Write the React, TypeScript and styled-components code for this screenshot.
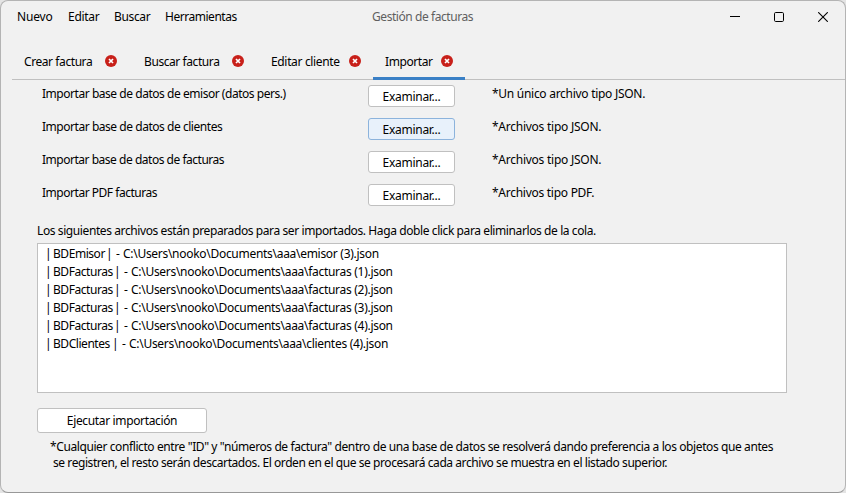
import React from 'react';
import styled, { createGlobalStyle } from 'styled-components';

const GlobalStyle = createGlobalStyle`
  html, body { margin: 0; height: 100%; background: #e4e4e4; overflow: hidden; }
  #root { height: 100%; }
  *, *::before, *::after { box-sizing: border-box; }
  button { font: inherit; color: inherit; }
`;

const Window = styled.div`
  display: flex;
  flex-direction: column;
  width: 846px;
  height: 493px;
  border: 1px solid #b4b4b4;
  border-bottom-color: #989898;
  border-radius: 8px;
  background: #f1f1f1;
  color: #000;
  font: 12px/16px 'Noto Sans', 'Open Sans', sans-serif;
  overflow: hidden;
`;

const Text = styled.span<{ $track?: number }>`
  letter-spacing: ${(p) => p.$track ?? 0}px;
  white-space: pre;
`;

const TitleBar = styled.header`
  display: grid;
  grid-template-columns: 371px 1fr auto;
  align-items: center;
  height: 31px;
`;

const MenuBar = styled.nav`
  display: grid;
  grid-template-columns: 51px 46px 51px auto;
  padding-left: 16px;
`;

const Title = styled(Text)`
  color: #5f5f5f;
`;

const Controls = styled.div`
  display: flex;
`;

const Control = styled.button`
  display: grid;
  place-items: center;
  width: 44px;
  height: 31px;
  padding: 0;
  border: 0;
  background: none;
`;

const TabStrip = styled.div`
  display: flex;
  height: 36px;
  margin: 12px 0 0 11px;
  box-shadow: inset 0 -1px #c0c0c0;
`;

const Tab = styled.div<{ $width: number; $end: number; $active?: boolean }>`
  display: flex;
  justify-content: space-between;
  align-items: center;
  width: ${(p) => p.$width}px;
  padding: 0 ${(p) => p.$end}px 1px 12px;
  box-shadow: ${(p) => (p.$active ? 'inset 0 -3px #3a80c6' : 'none')};

  svg {
    flex: none;
    margin-bottom: 1px;
  }
`;

const ImportGrid = styled.section`
  display: grid;
  grid-template-columns: 326px 87px 1fr;
  grid-auto-rows: 22px;
  row-gap: 11px;
  margin: 5px 0 0 41px;
`;

const Label = styled(Text)`
  line-height: 18px;
`;

const Note = styled(Label)`
  padding-left: 37px;
`;

const Button = styled.button<{ $hot?: boolean; $wide?: boolean }>`
  display: flex;
  align-items: center;
  justify-content: center;
  width: ${(p) => (p.$wide ? 170 : 87)}px;
  height: ${(p) => (p.$wide ? 25 : 22)}px;
  padding: ${(p) => (p.$wide ? 0 : '2px 0 0')};
  border: 1px solid ${(p) => (p.$hot ? '#8cb3dc' : '#c0c0c0')};
  border-radius: 3px;
  background: ${(p) => (p.$hot ? '#e8f1fb' : '#fff')};
`;

const Queue = styled.section`
  display: flex;
  flex-direction: column;
  align-items: flex-start;
  padding: 17px 0 0 36px;
`;

const FileList = styled.ul`
  width: 750px;
  height: 150px;
  margin: 4px 0 15px;
  padding: 1px 0 0 7px;
  border: 1px solid #c0c0c0;
  background: #fff;
  list-style: none;
`;

const FileRow = styled.li<{ $tag: number }>`
  display: grid;
  grid-template-columns: 8px ${(p) => p.$tag}px 10px 7px 1fr;
  height: 18px;
  line-height: 18px;
`;

const Footnote = styled.p`
  display: flex;
  flex-direction: column;
  margin: 6px 0 0 13px;
`;

const SecondLine = styled(Text)`
  padding-left: 3px;
`;

const CloseBadge = () => (
  <svg width="12" height="12" viewBox="0 0 12 12">
    <circle cx="6" cy="6" r="6" fill="#c8201a" />
    <path d="M4 4l4 4M8 4L4 8" stroke="#fff" strokeWidth="1.7" />
  </svg>
);

const menus = [
  { name: 'Nuevo', track: -0.15 },
  { name: 'Editar', track: -0.28 },
  { name: 'Buscar', track: -0.35 },
  { name: 'Herramientas', track: -0.47 },
];

const tabs = [
  { name: 'Crear factura', track: -0.42, width: 120, end: 15 },
  { name: 'Buscar factura', track: -0.42, width: 127, end: 15 },
  { name: 'Editar cliente', track: -0.34, width: 114, end: 12 },
  { name: 'Importar', track: -0.42, width: 92, end: 12, active: true },
];

const imports = [
  { label: 'Importar base de datos de emisor (datos pers.)', track: -0.46, note: '*Un único archivo tipo JSON.', noteTrack: -0.28 },
  { label: 'Importar base de datos de clientes', track: -0.46, note: '*Archivos tipo JSON.', noteTrack: -0.25, hot: true },
  { label: 'Importar base de datos de facturas', track: -0.48, note: '*Archivos tipo JSON.', noteTrack: -0.25 },
  { label: 'Importar PDF facturas', track: -0.47, note: '*Archivos tipo PDF.', noteTrack: -0.27 },
];

const files = [
  { tag: 'BDEmisor', width: 53, file: 'emisor (3).json' },
  { tag: 'BDFacturas', width: 61, file: 'facturas (1).json' },
  { tag: 'BDFacturas', width: 61, file: 'facturas (2).json' },
  { tag: 'BDFacturas', width: 61, file: 'facturas (3).json' },
  { tag: 'BDFacturas', width: 61, file: 'facturas (4).json' },
  { tag: 'BDClientes', width: 59, file: 'clientes (4).json' },
];

export default function App() {
  return (
    <>
      <GlobalStyle />
      <Window>
        <TitleBar>
          <MenuBar>
            {menus.map((m) => (
              <Text key={m.name} $track={m.track}>{m.name}</Text>
            ))}
          </MenuBar>
          <Title $track={-0.43}>Gestión de facturas</Title>
          <Controls>
            <Control aria-label="Minimizar">
              <svg width="10" height="10" viewBox="0 0 10 10"><path d="M0 4.5h10" stroke="#000" /></svg>
            </Control>
            <Control aria-label="Maximizar">
              <svg width="10" height="10" viewBox="0 0 10 10"><rect x=".5" y=".5" width="9" height="9" rx="1.2" fill="none" stroke="#000" /></svg>
            </Control>
            <Control aria-label="Cerrar">
              <svg width="10" height="10" viewBox="0 0 10 10"><path d="M.2.2l9.6 9.6M9.8.2L.2 9.8" stroke="#000" strokeWidth="1.1" /></svg>
            </Control>
          </Controls>
        </TitleBar>
        <TabStrip>
          {tabs.map((t) => (
            <Tab key={t.name} $width={t.width} $end={t.end} $active={t.active}>
              <Text $track={t.track}>{t.name}</Text>
              <CloseBadge />
            </Tab>
          ))}
        </TabStrip>
        <ImportGrid>
          {imports.map((row) => (
            <React.Fragment key={row.label}>
              <Label $track={row.track}>{row.label}</Label>
              <Button $hot={row.hot}><Text $track={-0.28}>Examinar...</Text></Button>
              <Note $track={row.noteTrack}>{row.note}</Note>
            </React.Fragment>
          ))}
        </ImportGrid>
        <Queue>
          <Text $track={-0.402}>
            Los siguientes archivos están preparados para ser importados. Haga doble click para eliminarlos de la cola.
          </Text>
          <FileList>
            {files.map((f) => (
              <FileRow key={f.tag + f.file} $tag={f.width}>
                <Text>|</Text>
                <Text $track={-0.45}>{f.tag}</Text>
                <Text>|</Text>
                <Text>-</Text>
                <Text $track={-0.29}>{`C:\\Users\\nooko\\Documents\\aaa\\${f.file}`}</Text>
              </FileRow>
            ))}
          </FileList>
          <Button $wide><Text $track={-0.35}>Ejecutar importación</Text></Button>
          <Footnote>
            <Text $track={-0.403}>
              *Cualquier conflicto entre "ID" y "números de factura" dentro de una base de datos se resolverá dando preferencia a los objetos que antes
            </Text>
            <SecondLine $track={-0.43}>
              se registren, el resto serán descartados. El orden en el que se procesará cada archivo se muestra en el listado superior.
            </SecondLine>
          </Footnote>
        </Queue>
      </Window>
    </>
  );
}
